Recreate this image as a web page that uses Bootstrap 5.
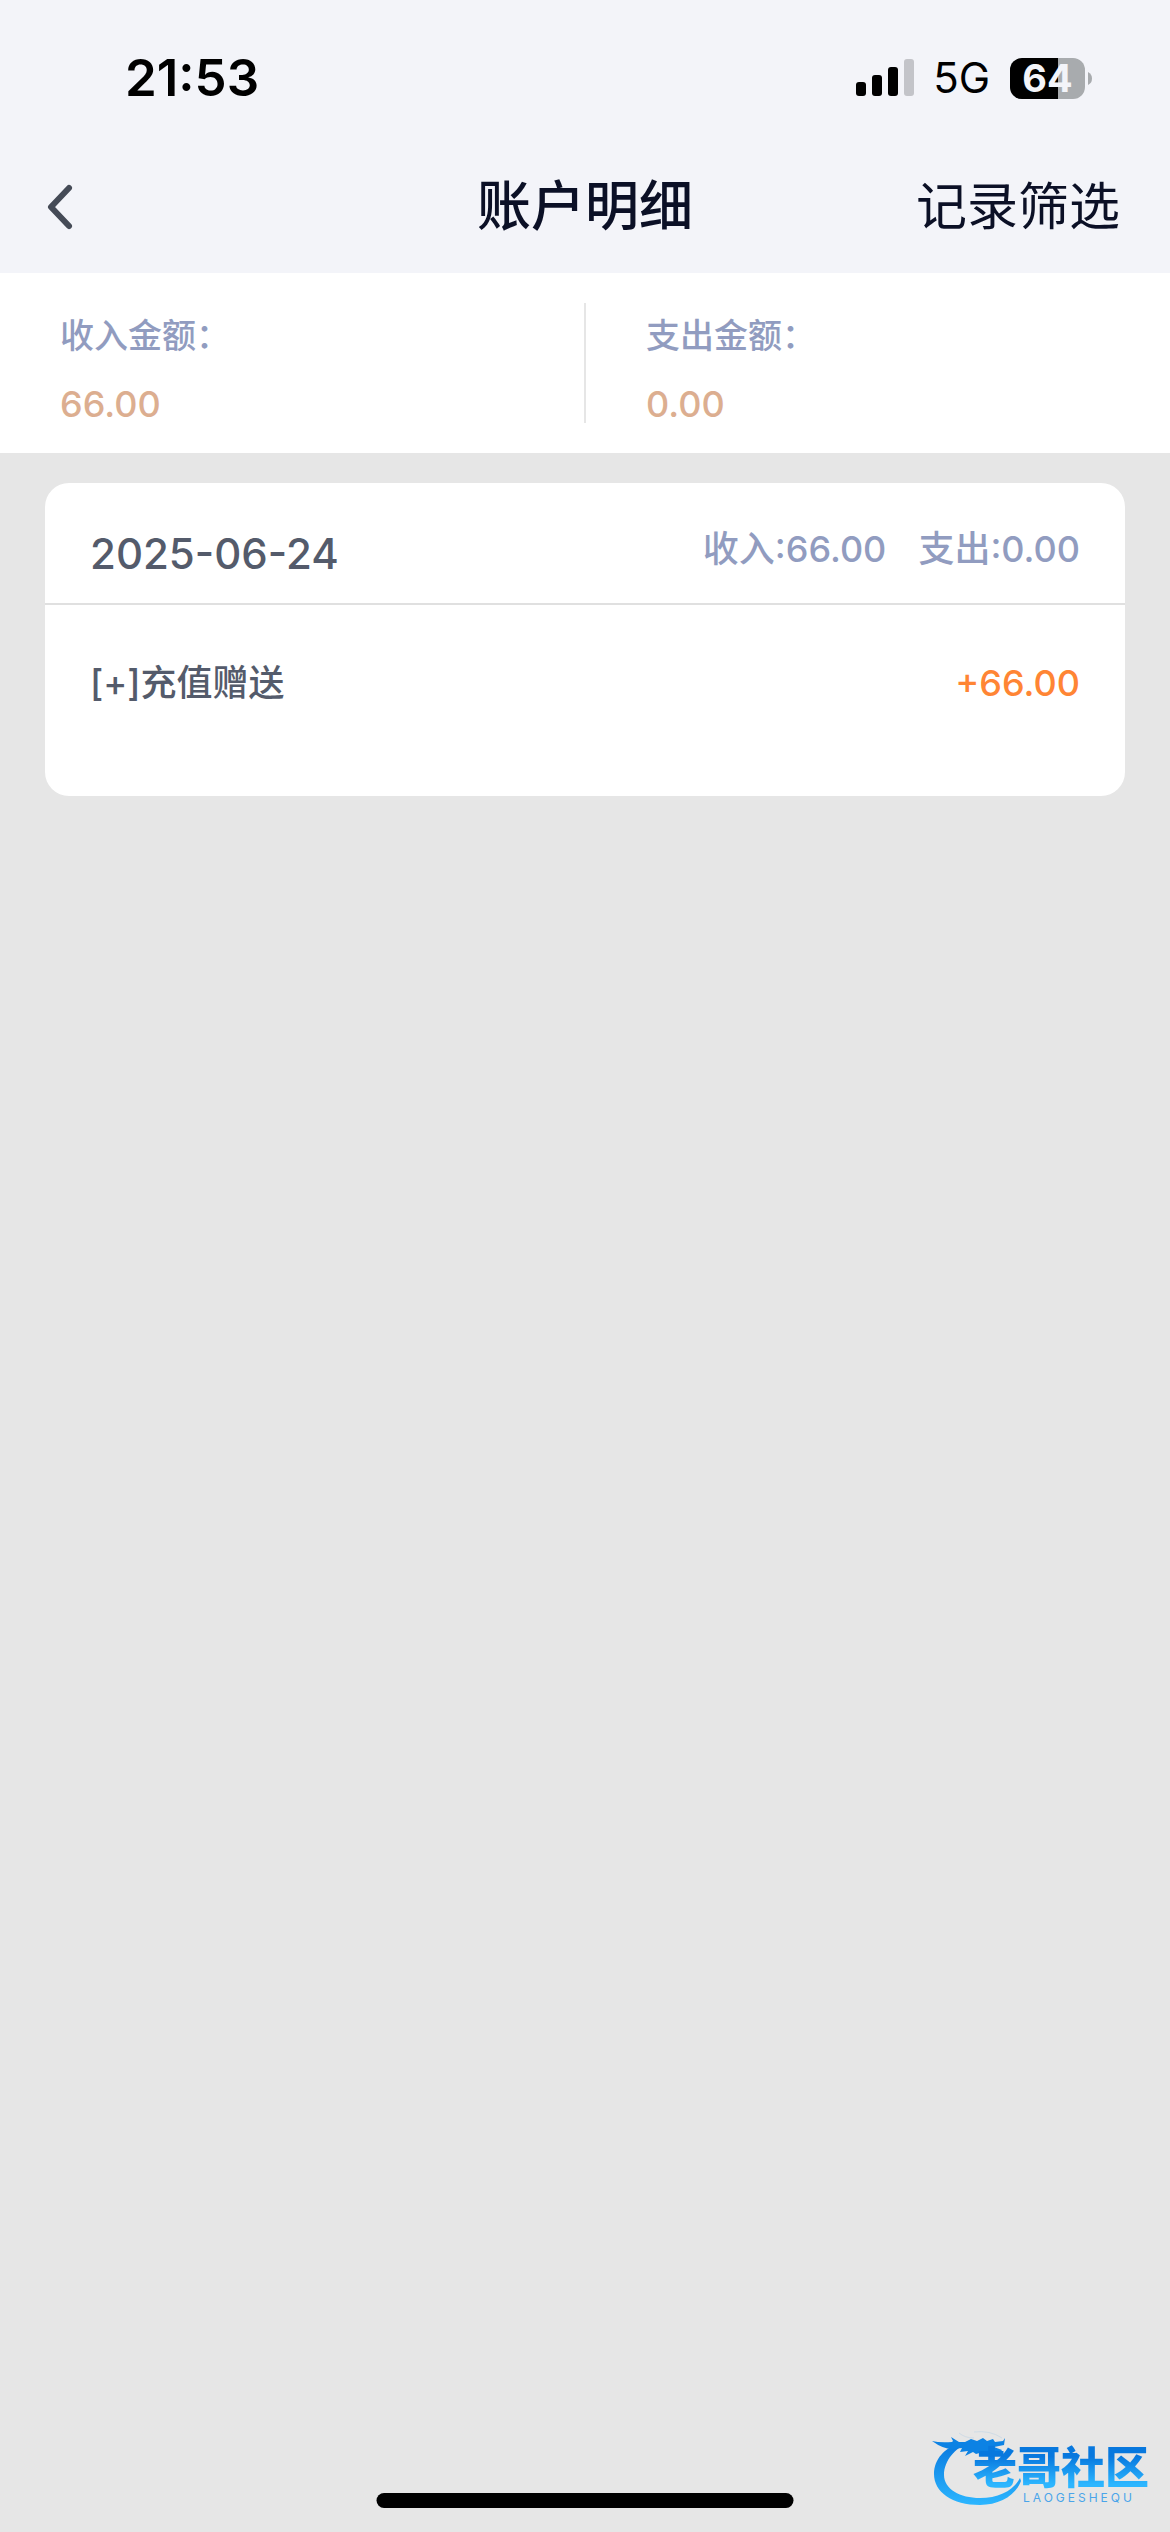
<!DOCTYPE html>
<html lang="zh-CN">
<head>
<meta charset="utf-8">
<meta name="viewport" content="width=device-width, initial-scale=1">
<title>账户明细</title>
<link href="https://cdn.jsdelivr.net/npm/bootstrap@5.3.0/dist/css/bootstrap.min.css" rel="stylesheet">
<style>
  body { font-family: Inter, "Noto Sans CJK SC", sans-serif; background: #e6e6e6; color: #545b6b; }
  .top-area { background: #f3f4f9; }
  .status-bar { padding: 46px 78px 0 125px; height: 144px; color: #000; }
  .clock { font-size: 51px; line-height: 64px; font-weight: 600; }
  .network { font-size: 42px; line-height: 64px; margin: 0 20px 0 18px; }
  .battery-box { width: 82px; height: 41px; }
  .battery-level { font-size: 38px; line-height: 41px; width: 75px; color: #f3f4f9; }
  .title-bar { display: grid; grid-template-columns: 1fr auto 1fr; height: 129px; padding: 0 50px 3px; color: #0b1026; }
  .back-icon { overflow: visible; }
  .page-name { font-size: 54px; line-height: 72px; font-weight: 500; }
  .filter-link { font-size: 51px; line-height: 72px; color: #0b1026; }
  .summary { padding: 30px 0; }
  .summary-item { padding: 12px 60px 0; height: 120px; }
  .summary-item + .summary-item { border-left: 2px solid #e6e6e6; }
  .summary-label { font-size: 34px; line-height: 42px; font-weight: 500; color: #919cc0; }
  .summary-value { font-size: 36px; line-height: 42px; margin-top: 26px; color: #dcae90; font-weight: 500; }
  .records { padding: 30px 45px; }
  .record-card { --bs-card-border-width: 0; --bs-card-border-radius: 24px; --bs-card-inner-border-radius: 24px; --bs-card-color: #545b6b; }
  .day-head { height: 122px; padding: 36px 45px 0; border-bottom: 2px solid #e0e0e0; }
  .day-date { font-size: 42px; line-height: 69px; font-weight: 500; }
  .day-totals { font-size: 36px; line-height: 60px; gap: 32px; color: #919cc0; font-weight: 500; }
  .record-row { height: 191px; padding: 48px 45px 0; font-size: 36px; line-height: 60px; font-weight: 500; }
  .amount-in { color: #ff8534; }
  .bottom-area { height: 104px; }
  .home-indicator { width: 417px; height: 15px; bottom: 24px; background: #000; }
  .brand-mark { right: 16px; bottom: 24px; width: 222px; height: 77px; }
  .brand-words { padding-left: 41px; padding-top: 14px; }
  .brand-name { font-size: 44px; line-height: 46px; font-weight: 900; background: linear-gradient(#0878de 25%, #2cb6ff 85%); -webkit-background-clip: text; background-clip: text; color: transparent; }
  .brand-latin { font-size: 12px; line-height: 14px; letter-spacing: 3px; padding-left: 50px; color: #4aa5ea; }
</style>
</head>
<body>
<div class="min-vh-100 d-flex flex-column">
  <header class="top-area">
    <div class="status-bar d-flex justify-content-between align-items-start">
      <div class="clock">21:53</div>
      <div class="d-flex align-items-center">
        <svg width="59" height="38" viewBox="0 0 59 38" aria-hidden="true">
          <rect x="0" y="23" width="10" height="14" rx="3"/>
          <rect x="16" y="16" width="10" height="21" rx="3"/>
          <rect x="32" y="8" width="10" height="29" rx="3"/>
          <rect x="48" y="0" width="10" height="37" rx="3" fill="#c3c4c9"/>
        </svg>
        <span class="network">5G</span>
        <div class="battery-box position-relative">
          <svg class="d-block" width="82" height="41" viewBox="0 0 82 41" aria-hidden="true">
            <clipPath id="cell"><rect width="75" height="41" rx="12"/></clipPath>
            <g clip-path="url(#cell)"><rect width="75" height="41" fill="#a8abae"/><rect width="48" height="41"/></g>
            <path d="M78 14q4 2 4 6.500t-4 6.500z" fill="#a8abae"/>
          </svg>
          <span class="battery-level position-absolute top-0 start-0 text-center fw-bold">64</span>
        </div>
      </div>
    </div>
    <nav class="title-bar align-items-center">
      <a href="#" aria-label="返回">
        <svg class="back-icon d-block" width="24" height="46" viewBox="5 0 24 46" fill="none" stroke="#454b57" stroke-width="6" stroke-linecap="round" stroke-linejoin="round"><path d="M24 4L6 23l18 19"/></svg>
      </a>
      <h1 class="page-name m-0">账户明细</h1>
      <a href="#" class="filter-link text-decoration-none text-end">记录筛选</a>
    </nav>
  </header>
  <section class="summary bg-white">
    <div class="row g-0">
      <div class="col summary-item">
        <div class="summary-label">收入金额：</div>
        <div class="summary-value">66.00</div>
      </div>
      <div class="col summary-item">
        <div class="summary-label">支出金额：</div>
        <div class="summary-value">0.00</div>
      </div>
    </div>
  </section>
  <main class="records flex-grow-1">
    <article class="card record-card">
      <div class="day-head d-flex justify-content-between align-items-start">
        <time class="day-date" datetime="2025-06-24">2025-06-24</time>
        <div class="day-totals d-flex"><span>收入:66.00</span><span>支出:0.00</span></div>
      </div>
      <div class="record-row d-flex justify-content-between align-items-start">
        <span>[+]充值赠送</span>
        <span class="amount-in">+66.00</span>
      </div>
    </article>
  </main>
  <footer class="bottom-area position-relative">
    <div class="home-indicator rounded-pill position-absolute start-50 translate-middle-x"></div>
    <div class="brand-mark position-absolute">
      <svg class="position-absolute top-0 start-0" width="92" height="77" viewBox="0 0 92 77" aria-hidden="true">
        <defs><linearGradient id="blue" x1="0" y1="0" x2="0" y2="1"><stop offset="0" stop-color="#0878de"/><stop offset="1" stop-color="#2cb6ff"/></linearGradient></defs>
        <!-- dragon body, then head with horns and whiskers -->
        <path fill="url(#blue)" d="M36 12C24 17 12 29 12 44c0 14 16 23 36 23 19 0 34-8 40-20l1 3C84 64 68 74 48 74 20 74 2 61 2 43 2 28 13 17 26 13z"/>
        <path fill="#0c82e4" d="M0 10q8 2 20 1l1-1-2-4 8 5 6 0 6-3 6 2 6-3 4 3 6-2 2 3 8-1 2-3-1 7-10 2 8 3-2 3-8-1-6 2-3-2-7 2-3-2-8 4 3-5-8 1 2-4-10 1q-9 0-20-8z"/>
        <path d="M27 2q6 5 15 5M42 1q16-2 28 6" fill="none" stroke="#cfdbe5" stroke-width="1"/>
      </svg>
      <div class="brand-words position-relative">
        <div class="brand-name text-nowrap">老哥社区</div>
        <div class="brand-latin">LAOGESHEQU</div>
      </div>
    </div>
  </footer>
</div>
<script src="https://cdn.jsdelivr.net/npm/bootstrap@5.3.0/dist/js/bootstrap.bundle.min.js"></script>
</body>
</html>
